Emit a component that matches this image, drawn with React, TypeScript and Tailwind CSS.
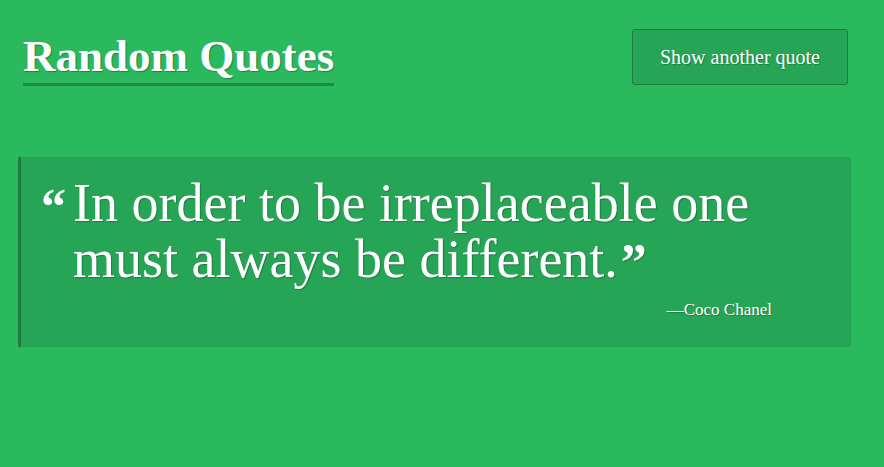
export default function App() {
  return (
    <div
      className="min-h-screen w-full bg-[#2bb95e] text-white"
      style={{ fontFamily: '"Liberation Serif", "DejaVu Serif", serif' }}
    >
      <header className="flex items-start justify-between pl-[23px] pr-[36px] pt-[29px]">
        <h1 className="mt-[4px] border-b-[3px] border-[#1f8a45] pb-[4px] text-[45px] font-bold leading-[46px] [text-shadow:1px_1px_1px_rgba(0,0,0,0.3)]">
          Random Quotes
        </h1>
        <button className="h-[56px] w-[216px] rounded-[3px] border border-[#1d7d3f] bg-[#27a556] text-[20px] text-white [text-shadow:1px_1px_1px_rgba(0,0,0,0.25)]">
          Show another quote
        </button>
      </header>

      <blockquote className="ml-[18px] mt-[71px] w-[833px] rounded-r-[3px] border-l-[3px] border-[#1e7c3f] bg-[#27a556] pb-[24px] pl-[17px] pr-[20px] pt-[18px]">
        <div className="flex items-start">
          <span className="mt-[11px] w-[35px] shrink-0 pl-[3px] text-[50px] font-bold leading-[40px]">“</span>
          <p className="text-[54px] leading-[56px] [text-shadow:1px_1px_1px_rgba(0,0,0,0.25)]">
            In order to be irreplaceable one
            <br />
            must always be different.
            <span className="relative top-[3px] ml-[3px] text-[52px] font-bold leading-[0px]">”</span>
          </p>
        </div>
        <footer className="mt-[10px] pr-[59px] text-right text-[17px] [text-shadow:1px_1px_1px_rgba(0,0,0,0.25)]">
          —Coco Chanel
        </footer>
      </blockquote>
    </div>
  );
}
